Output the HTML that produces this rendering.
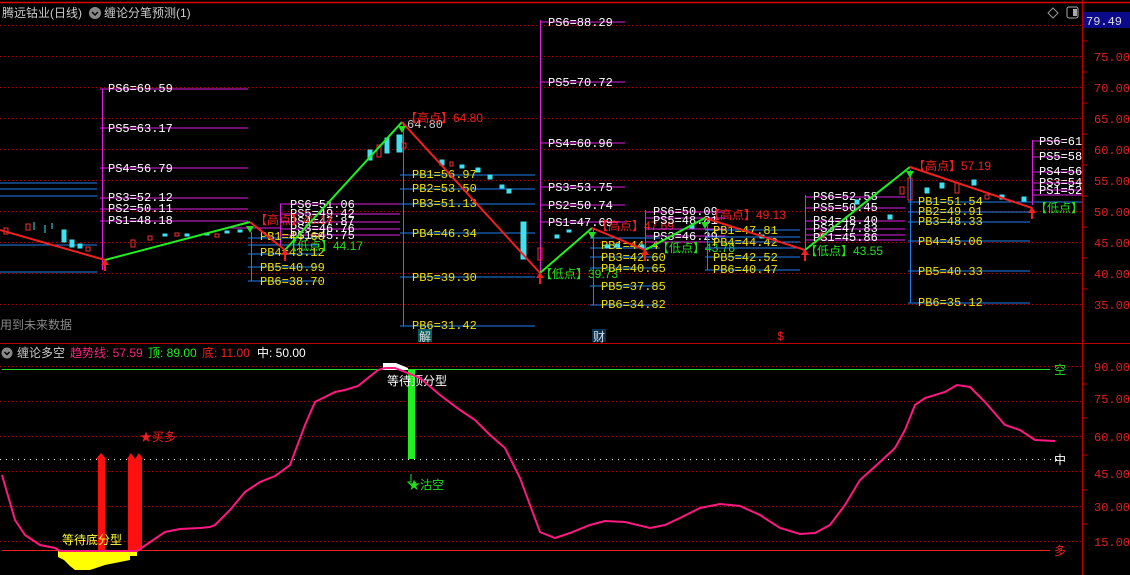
<!DOCTYPE html>
<html><head><meta charset="utf-8"><style>
html,body{margin:0;padding:0;background:#000;width:1130px;height:575px;overflow:hidden}
svg{display:block}
text{font-family:"Liberation Mono","WenQuanYi Zen Hei",monospace;font-size:12px}
.c{font-family:"Liberation Sans","WenQuanYi Zen Hei",sans-serif;font-size:12px}
</style></head><body>
<svg width="1130" height="575" viewBox="0 0 1130 575" xmlns="http://www.w3.org/2000/svg">
<rect width="1130" height="575" fill="#000"/>
<line x1="0" y1="2.5" x2="1130" y2="2.5" stroke="#e00000" stroke-width="1.5"/>
<line x1="1082.5" y1="0" x2="1082.5" y2="575" stroke="#c00000"/>
<line x1="0" y1="343.5" x2="1130" y2="343.5" stroke="#c00000"/>
<g stroke="#b00000" stroke-dasharray="1,3">
<line x1="0" y1="25.5" x2="1082" y2="25.5"/><line x1="0" y1="56.5" x2="1082" y2="56.5"/>
<line x1="0" y1="87.5" x2="1082" y2="87.5"/><line x1="0" y1="118.5" x2="1082" y2="118.5"/>
<line x1="0" y1="149.5" x2="1082" y2="149.5"/><line x1="0" y1="180.5" x2="1082" y2="180.5"/>
<line x1="0" y1="211.5" x2="1082" y2="211.5"/><line x1="0" y1="242.5" x2="1082" y2="242.5"/>
<line x1="0" y1="273.5" x2="1082" y2="273.5"/><line x1="0" y1="304.5" x2="1082" y2="304.5"/>
</g>
<rect x="1083" y="12" width="47" height="16" fill="#0a0a8a"/>
<text x="1086" y="25" fill="#ddd" font-size="13">79.49</text>
<g fill="#e02020" font-size="13">
<text x="1094" y="61">75.00</text><text x="1094" y="92">70.00</text><text x="1094" y="123">65.00</text>
<text x="1094" y="154">60.00</text><text x="1094" y="185">55.00</text><text x="1094" y="216">50.00</text>
<text x="1094" y="247">45.00</text><text x="1094" y="278">40.00</text><text x="1094" y="309">35.00</text>
<text x="1094" y="371">90.00</text><text x="1094" y="403">75.00</text><text x="1094" y="441">60.00</text>
<text x="1094" y="478">45.00</text><text x="1094" y="511">30.00</text><text x="1094" y="546">15.00</text>
</g>
<g stroke="#c00000"><line x1="1083" y1="41" x2="1087" y2="41"/><line x1="1083" y1="72" x2="1087" y2="72"/><line x1="1083" y1="103" x2="1087" y2="103"/><line x1="1083" y1="134" x2="1087" y2="134"/><line x1="1083" y1="165" x2="1087" y2="165"/><line x1="1083" y1="196" x2="1087" y2="196"/><line x1="1083" y1="227" x2="1087" y2="227"/><line x1="1083" y1="258" x2="1087" y2="258"/><line x1="1083" y1="289" x2="1087" y2="289"/><line x1="1083" y1="384" x2="1087" y2="384"/><line x1="1083" y1="418" x2="1087" y2="418"/><line x1="1083" y1="455" x2="1087" y2="455"/><line x1="1083" y1="490" x2="1087" y2="490"/><line x1="1083" y1="524" x2="1087" y2="524"/></g>
<text class="c" x="2" y="17" fill="#ccc" font-size="13">腾远钴业(日线)</text>
<circle cx="95" cy="13" r="6" fill="#888"/><path d="M92 12l3 3 3-3" stroke="#000" stroke-width="1.5" fill="none"/>
<text class="c" x="104" y="17" fill="#ccc" font-size="13">缠论分笔预测(1)</text>
<path d="M1053 8l5 5-5 5-5-5z" stroke="#999" fill="none"/>
<rect x="1067" y="7" width="11" height="11" rx="2" stroke="#aaa" fill="none"/><rect x="1073" y="9" width="4" height="7" fill="#aaa"/>
<g stroke="#2080f0"><line x1="0" y1="183" x2="97" y2="183"/><line x1="0" y1="189" x2="97" y2="189"/><line x1="0" y1="196" x2="97" y2="196"/><line x1="0" y1="245" x2="97" y2="245"/><line x1="0" y1="272" x2="97" y2="272"/></g>
<g stroke="#e020e0"><line x1="102.5" y1="89" x2="102.5" y2="270"/><line x1="100" y1="89" x2="248" y2="89"/><line x1="100" y1="128" x2="248" y2="128"/><line x1="100" y1="168" x2="248" y2="168"/><line x1="100" y1="198" x2="248" y2="198"/><line x1="100" y1="209" x2="248" y2="209"/><line x1="100" y1="221" x2="248" y2="221"/></g>
<g fill="#fff"><text x="108" y="92">PS6=69.59</text><text x="108" y="132">PS5=63.17</text><text x="108" y="172">PS4=56.79</text><text x="108" y="201">PS3=52.12</text><text x="108" y="212">PS2=50.11</text><text x="108" y="224">PS1=48.18</text></g>
<g stroke="#e020e0"><line x1="280" y1="204" x2="400" y2="204"/><line x1="280" y1="214" x2="400" y2="214"/><line x1="280" y1="222" x2="400" y2="222"/><line x1="280" y1="229" x2="400" y2="229"/><line x1="280" y1="235" x2="400" y2="235"/><line x1="230" y1="228" x2="280" y2="228"/><line x1="280.5" y1="204" x2="280.5" y2="245"/></g>
<g stroke="#2080f0"><line x1="251.5" y1="232" x2="251.5" y2="281"/><line x1="248" y1="238" x2="320" y2="238"/><line x1="248" y1="245" x2="320" y2="245"/><line x1="248" y1="254" x2="320" y2="254"/><line x1="248" y1="267" x2="320" y2="267"/><line x1="248" y1="281" x2="320" y2="281"/></g>
<g fill="#fff"><text x="290" y="208">PS6=51.06</text><text x="290" y="217">PS5=49.42</text><text x="290" y="225">PS4=47.87</text><text x="290" y="232">PS3=46.76</text><text x="290" y="239">PS1=45.75</text></g>
<g fill="#f0e000"><text x="260" y="240">PB1=44.60</text><text x="260" y="256">PB4=43.12</text><text x="260" y="271">PB5=40.99</text><text x="260" y="285">PB6=38.70</text></g>
<text x="255" y="224" fill="#f02020" class="c">【高点】48.14</text>
<text x="285" y="250" fill="#20e020" class="c">【低点】44.17</text>
<g stroke="#2080f0"><line x1="403.5" y1="122" x2="403.5" y2="326"/><line x1="400" y1="175" x2="535" y2="175"/><line x1="400" y1="189" x2="535" y2="189"/><line x1="400" y1="204" x2="535" y2="204"/><line x1="400" y1="233" x2="535" y2="233"/><line x1="400" y1="277" x2="535" y2="277"/><line x1="400" y1="326" x2="535" y2="326"/></g>
<g fill="#f0e000"><text x="412" y="178">PB1=56.97</text><text x="412" y="192">PB2=53.50</text><text x="412" y="207">PB3=51.13</text><text x="412" y="237">PB4=46.34</text><text x="412" y="281">PB5=39.30</text><text x="412" y="329">PB6=31.42</text></g>
<text x="407" y="128" fill="#ccc">64.80</text>
<text x="405" y="122" fill="#f02020" class="c">【高点】64.80</text>
<g stroke="#e020e0"><line x1="540.5" y1="20" x2="540.5" y2="273"/><line x1="540" y1="22" x2="625" y2="22"/><line x1="540" y1="82" x2="625" y2="82"/><line x1="540" y1="143" x2="625" y2="143"/><line x1="540" y1="187" x2="625" y2="187"/><line x1="540" y1="205" x2="625" y2="205"/><line x1="540" y1="222" x2="625" y2="222"/></g>
<g fill="#fff"><text x="548" y="26">PS6=88.29</text><text x="548" y="86">PS5=70.72</text><text x="548" y="147">PS4=60.96</text><text x="548" y="191">PS3=53.75</text><text x="548" y="209">PS2=50.74</text><text x="548" y="226">PS1=47.69</text></g>
<text x="540" y="278" fill="#20e020" class="c">【低点】39.73</text>
<g stroke="#2080f0"><line x1="593.5" y1="228" x2="593.5" y2="305"/><line x1="590" y1="238" x2="660" y2="238"/><line x1="590" y1="248" x2="660" y2="248"/><line x1="590" y1="257" x2="660" y2="257"/><line x1="590" y1="268" x2="660" y2="268"/><line x1="590" y1="286" x2="660" y2="286"/><line x1="590" y1="305" x2="660" y2="305"/></g>
<g fill="#f0e000"><text x="601" y="249">PB1=44.4</text><text x="601" y="261">PB3=42.60</text><text x="601" y="272">PB4=40.65</text><text x="601" y="290">PB5=37.85</text><text x="601" y="308">PB6=34.82</text></g>
<text x="596" y="230" fill="#f02020" class="c">【高点】47.69</text>
<g stroke="#e020e0"><line x1="645.5" y1="210" x2="645.5" y2="248"/><line x1="645" y1="212" x2="725" y2="212"/><line x1="645" y1="218" x2="725" y2="218"/><line x1="645" y1="229" x2="725" y2="229"/><line x1="645" y1="236" x2="725" y2="236"/><line x1="645" y1="242" x2="725" y2="242"/></g>
<g fill="#fff"><text x="653" y="215">PS6=50.09</text><text x="653" y="224">PS5=48.81</text><text x="653" y="240">PS3=46.29</text></g>
<text x="657" y="252" fill="#20e020" class="c">【低点】43.78</text>
<text x="708" y="219" fill="#f02020" class="c">【高点】49.13</text>
<g stroke="#2080f0"><line x1="707.5" y1="218" x2="707.5" y2="270"/><line x1="705" y1="230" x2="800" y2="230"/><line x1="705" y1="237" x2="800" y2="237"/><line x1="705" y1="242" x2="800" y2="242"/><line x1="705" y1="248" x2="800" y2="248"/><line x1="705" y1="257" x2="800" y2="257"/><line x1="705" y1="270" x2="800" y2="270"/></g>
<g fill="#f0e000"><text x="713" y="234">PB1=47.81</text><text x="713" y="246">PB4=44.42</text><text x="713" y="261">PB5=42.52</text><text x="713" y="273">PB6=40.47</text></g>
<g stroke="#e020e0"><line x1="805.5" y1="195" x2="805.5" y2="250"/><line x1="805" y1="197" x2="905" y2="197"/><line x1="805" y1="208" x2="905" y2="208"/><line x1="805" y1="221" x2="905" y2="221"/><line x1="805" y1="229" x2="905" y2="229"/><line x1="805" y1="235" x2="905" y2="235"/><line x1="805" y1="240" x2="905" y2="240"/></g>
<g fill="#fff"><text x="813" y="200">PS6=52.58</text><text x="813" y="211">PS5=50.45</text><text x="813" y="224">PS4=48.40</text><text x="813" y="232">PS3=47.83</text><text x="813" y="241">PS1=45.86</text></g>
<text x="805" y="255" fill="#20e020" class="c">【低点】43.55</text>
<g stroke="#2080f0"><line x1="910.5" y1="170" x2="910.5" y2="303"/><line x1="908" y1="202" x2="1082" y2="202"/><line x1="908" y1="212" x2="1030" y2="212"/><line x1="908" y1="222" x2="1030" y2="222"/><line x1="908" y1="241" x2="1030" y2="241"/><line x1="908" y1="271" x2="1030" y2="271"/><line x1="908" y1="303" x2="1030" y2="303"/></g>
<g fill="#f0e000"><text x="918" y="205">PB1=51.54</text><text x="918" y="215">PB2=49.91</text><text x="918" y="225">PB3=48.33</text><text x="918" y="245">PB4=45.06</text><text x="918" y="275">PB5=40.33</text><text x="918" y="306">PB6=35.12</text></g>
<text x="913" y="170" fill="#f02020" class="c">【高点】57.19</text>
<g stroke="#e020e0"><line x1="1032.5" y1="140" x2="1032.5" y2="205"/><line x1="1032" y1="141" x2="1062" y2="141"/><line x1="1032" y1="157" x2="1062" y2="157"/><line x1="1032" y1="172" x2="1082" y2="172"/><line x1="1032" y1="183" x2="1082" y2="183"/><line x1="1032" y1="190" x2="1082" y2="190"/><line x1="1032" y1="195" x2="1082" y2="195"/></g>
<svg x="1035" y="130" width="47" height="90"><g fill="#fff"><text x="4" y="15">PS6=61</text><text x="4" y="30">PS5=58</text><text x="4" y="45">PS4=56</text><text x="4" y="56">PS3=54</text><text x="4" y="64">PS1=52</text></g><text x="0" y="82" fill="#20e020" class="c">【低点】</text></svg>
<g fill="#40e0f0" stroke="#40e0f0">
<rect x="62" y="230" width="4" height="12"/><rect x="70" y="240" width="4" height="7"/><rect x="78" y="244" width="4" height="4"/><line x1="34" y1="222" x2="34" y2="230"/><line x1="45" y1="225" x2="45" y2="233"/><line x1="52" y1="223" x2="52" y2="229"/>
<rect x="163" y="234" width="4" height="2"/><rect x="185" y="234" width="4" height="2"/><rect x="205" y="233" width="4" height="2"/><rect x="225" y="231" width="4" height="2"/><rect x="238" y="230" width="4" height="2"/>
<rect x="397" y="135" width="5" height="17"/><rect x="385" y="138" width="4" height="15"/><rect x="368" y="150" width="4" height="10"/>
<rect x="440" y="160" width="4" height="5"/><rect x="460" y="165" width="4" height="3"/><rect x="476" y="168" width="4" height="4"/><rect x="488" y="175" width="4" height="4"/><rect x="500" y="185" width="4" height="3"/><rect x="507" y="189" width="4" height="4"/>
<rect x="521" y="222" width="5" height="37"/><rect x="555" y="235" width="4" height="3"/><rect x="567" y="230" width="4" height="2"/>
<rect x="605" y="245" width="4" height="3"/><rect x="615" y="244" width="4" height="3"/><rect x="640" y="245" width="4" height="3"/><rect x="690" y="225" width="4" height="3"/><rect x="760" y="235" width="4" height="3"/>
<rect x="855" y="200" width="4" height="4"/><rect x="888" y="215" width="4" height="4"/><rect x="925" y="188" width="4" height="5"/><rect x="940" y="183" width="4" height="5"/><rect x="972" y="180" width="4" height="5"/><rect x="1000" y="195" width="4" height="4"/><rect x="1022" y="197" width="4" height="4"/>
</g>
<g fill="none" stroke="#f03030">
<rect x="4" y="228" width="4" height="6"/><rect x="26" y="224" width="4" height="6"/><rect x="86" y="247" width="4" height="4"/><rect x="131" y="240" width="4" height="7"/><rect x="148" y="236" width="4" height="4"/><rect x="175" y="233" width="4" height="3"/><rect x="215" y="234" width="4" height="3"/>
<rect x="377" y="145" width="4" height="12"/><rect x="402" y="143" width="4" height="5"/><rect x="450" y="162" width="3" height="4"/><rect x="538" y="248" width="4" height="12"/>
<rect x="908" y="178" width="4" height="22"/><rect x="955" y="183" width="4" height="10"/><rect x="985" y="195" width="4" height="4"/><rect x="900" y="187" width="4" height="7"/><rect x="820" y="233" width="4" height="5"/>
</g>
<polyline points="0,230 105,260" stroke="#f02020" stroke-width="2" fill="none"/>
<polyline points="105,260 250,222" stroke="#20f020" stroke-width="2" fill="none"/>
<polyline points="250,222 285,250" stroke="#f02020" stroke-width="2" fill="none"/>
<polyline points="285,250 402,122" stroke="#20f020" stroke-width="2" fill="none"/>
<polyline points="402,122 540,273" stroke="#f02020" stroke-width="2" fill="none"/>
<polyline points="540,273 592,228" stroke="#20f020" stroke-width="2" fill="none"/>
<polyline points="592,228 645,250" stroke="#f02020" stroke-width="2" fill="none"/>
<polyline points="645,250 705,218" stroke="#20f020" stroke-width="2" fill="none"/>
<polyline points="705,218 805,250" stroke="#f02020" stroke-width="2" fill="none"/>
<polyline points="805,250 910,167" stroke="#20f020" stroke-width="2" fill="none"/>
<polyline points="910,167 1032,208" stroke="#f02020" stroke-width="2" fill="none"/>
<g fill="#f02020"><path d="M101 265l4-6 4 6h-3v6h-2v-6z"/><path d="M281 255l4-6 4 6h-3v6h-2v-6z"/><path d="M536 278l4-6 4 6h-3v6h-2v-6z"/><path d="M801 255l4-6 4 6h-3v6h-2v-6z"/><path d="M1028 213l4-6 4 6h-3v6h-2v-6z"/><path d="M641 255l4-6 4 6h-3v6h-2v-6z"/></g>
<g fill="#20e020"><path d="M398 126l4 7 4-7z"/><path d="M246 226l4 7 4-7z"/><path d="M588 232l4 7 4-7z"/><path d="M701 222l4 7 4-7z"/><path d="M906 171l4 7 4-7z"/></g>
<text class="c" x="0" y="329" fill="#888">用到未来数据</text>
<rect x="418" y="329" width="14" height="13" fill="#0a6060"/><text class="c" x="419" y="341" fill="#ddd">解</text>
<rect x="592" y="329" width="14" height="13" fill="#0a3050"/><text class="c" x="593" y="341" fill="#ddd">财</text>
<text x="777" y="340" fill="#f02020">$</text>
<circle cx="7" cy="353" r="5.5" fill="#888"/><path d="M4.5 352l2.5 2.5 2.5-2.5" stroke="#000" stroke-width="1.5" fill="none"/>
<text class="c" x="17" y="357" fill="#ccc">缠论多空</text>
<text class="c" x="70" y="357" fill="#ff2080">趋势线: 57.59</text>
<text class="c" x="148" y="357" fill="#20f020">顶: 89.00</text>
<text class="c" x="202" y="357" fill="#f02020">底: 11.00</text>
<text class="c" x="257" y="357" fill="#fff">中: 50.00</text>
<g stroke="#b00000" stroke-dasharray="1,3"><line x1="0" y1="366.5" x2="1082" y2="366.5"/><line x1="0" y1="401.5" x2="1082" y2="401.5"/><line x1="0" y1="436.5" x2="1082" y2="436.5"/><line x1="0" y1="471.5" x2="1082" y2="471.5"/><line x1="0" y1="506.5" x2="1082" y2="506.5"/><line x1="0" y1="541.5" x2="1082" y2="541.5"/></g>
<line x1="0" y1="459.5" x2="1060" y2="459.5" stroke="#fff" stroke-dasharray="1,5"/>
<line x1="2" y1="369.5" x2="1050" y2="369.5" stroke="#20e020"/>
<line x1="2" y1="550.5" x2="1050" y2="550.5" stroke="#f02020"/>
<text class="c" x="1054" y="374" fill="#20e020">空</text>
<text class="c" x="1054" y="464" fill="#fff">中</text>
<text class="c" x="1054" y="555" fill="#f02020">多</text>
<polygon points="58,551 137,551 137,556 130,556 130,560 120,562 105,565 90,570 75,570 70,566 64,560 58,557" fill="#ffff00"/>
<rect x="98" y="459" width="7" height="92" fill="#ff1010"/><rect x="128" y="459" width="14" height="92" fill="#ff1010"/>
<g fill="#ff1010"><path d="M96 459l5-6 5 6z"/><path d="M127 459l4-6 4 6z"/><path d="M135 459l4-6 4 6z"/></g>
<rect x="408" y="370" width="7" height="89" fill="#20f020"/>
<polygon points="383,363 396,363 408,368 408,370 383,370" fill="#fff"/>
<text class="c" x="62" y="544" fill="#ffff40">等待底分型</text>
<text class="c" x="387" y="385" fill="#fff">等待顶分型</text>
<text class="c" x="140" y="441" fill="#f02020">★买多</text>
<text class="c" x="408" y="489" fill="#20e020">★沽空</text>
<path d="M411 474v8h-3l4 4 4-4" stroke="#20e020" fill="none"/>
<polyline fill="none" stroke="#ff1880" stroke-width="2" points="2,475 15,520 25,535 40,545 55,548 60,551 137,551 165,532 180,529 200,528 210,527 215,525 230,510 245,492 260,482 275,476 290,465 305,425 315,402 335,392 345,390 358,386 378,370 385,368 395,368 420,378 440,395 460,410 475,420 490,435 505,448 520,478 540,532 555,538 570,533 590,525 605,521 625,522 650,528 665,525 680,518 700,508 720,504 740,506 760,515 780,528 800,534 815,533 830,525 845,505 860,480 880,462 895,448 905,430 915,405 925,398 945,392 957,385 970,387 985,402 1005,425 1020,430 1035,440 1055,441"/>
</svg>
</body></html>
